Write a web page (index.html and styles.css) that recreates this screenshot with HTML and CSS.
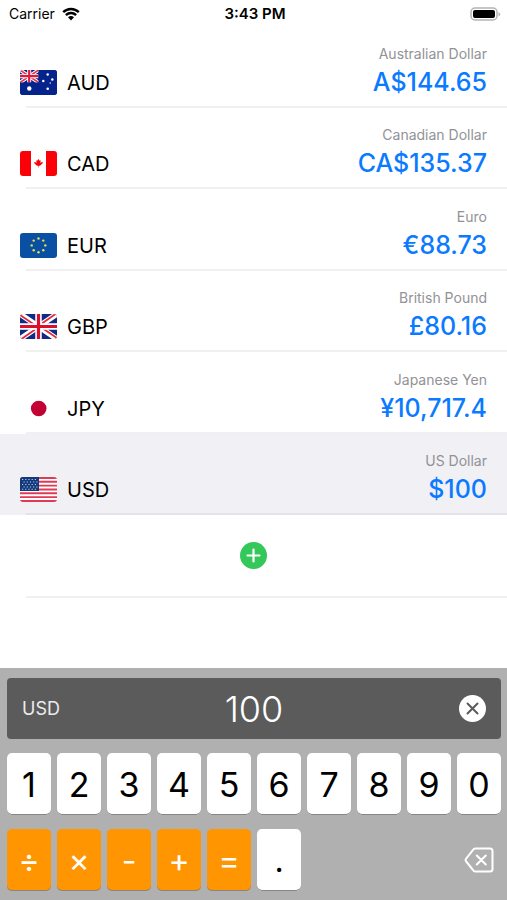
FILE: index.html
```html
<!DOCTYPE html>
<html lang="en">
<head>
<meta charset="utf-8">
<meta name="viewport" content="width=device-width, initial-scale=1">
<title>Currency Converter</title>
<link rel="stylesheet" href="styles.css">
</head>
<body>
<header class="status">
  <div class="carrier">
    <span>Carrier</span>
    <svg class="wifi" viewBox="0 0 18 14" aria-hidden="true">
      <path d="M1.2 5.2a11.2 11.2 0 0 1 15.6 0M3.9 8.1a7.3 7.3 0 0 1 10.2 0" fill="none" stroke="#000" stroke-width="2.4"/>
      <path d="M6 10.3a4.4 4.4 0 0 1 6 0l-3 3.3z"/>
    </svg>
  </div>
  <time class="clock">3:43 PM</time>
  <svg class="battery" viewBox="0 0 31 14" aria-hidden="true">
    <rect x="1" y="1" width="26" height="12" rx="4" fill="#fff" stroke="#b4b4b4" stroke-width="1.5"/>
    <rect x="3" y="3" width="22" height="8" rx="2"/>
    <path d="M28.5 5v4.4q1.7-.7 1.7-2.2t-1.7-2.2" fill="#b4b4b4"/>
  </svg>
</header>

<main class="content">
  <ul class="currencies">
    <li><button class="row" type="button">
      <svg class="flag" viewBox="0 0 37 25" aria-hidden="true">
        <rect width="37" height="25" fill="#04248c"/>
        <path d="M0 0l18.500 12.500M18.500 0l-18.500 12.500" stroke="#fff" stroke-width="3.600"/>
        <path d="M0 0l18.500 12.500M18.500 0l-18.500 12.500" stroke="#e8354c" stroke-width="1.600"/>
        <path d="M9.200 0v12.500M0 6.200h18.500" stroke="#fff" stroke-width="4"/>
        <path d="M9.200 0v12.500M0 6.200h18.500" stroke="#e0183c" stroke-width="2.200"/>
        <path d="M0 12.500h18.500V0H37v25H0z" fill="#04248c"/>
        <g fill="#fff"><circle cx="9.300" cy="18.500" r="2.200"/><circle cx="27.700" cy="4.500" r="1.200"/><circle cx="23.300" cy="11" r="1.200"/><circle cx="32.300" cy="9.500" r="1.200"/><circle cx="27.700" cy="18.700" r="1.300"/><circle cx="30.200" cy="13" r=".7"/></g>
      </svg>
      <span class="code">AUD</span>
      <span class="figures"><span class="name">Australian Dollar</span><span class="amount">A$144.65</span></span>
    </button></li>
    <li><button class="row" type="button">
      <svg class="flag" viewBox="0 0 37 25" aria-hidden="true">
        <rect width="37" height="25" fill="#fff"/>
        <path d="M0 0h11v25H0zM26 0h11v25H26z" fill="#fb0006"/>
        <path d="M18.500 8l1.200 1.800 1-.5-.3 2.600 1.500-1 1 .3-.5 1.300-2.500 2.200h-1.200v1.800h-.5v-1.800h-1.200l-2.500-2.200-.4-1.300 1-.3 1.500 1-.4-2.600 1 .5z" fill="#fb0006"/>
      </svg>
      <span class="code">CAD</span>
      <span class="figures"><span class="name">Canadian Dollar</span><span class="amount">CA$135.37</span></span>
    </button></li>
    <li><button class="row" type="button">
      <svg class="flag" viewBox="0 0 37 25" aria-hidden="true">
        <rect width="37" height="25" fill="#0950a5"/>
        <g fill="#e6e04a"><circle cx="18.500" cy="5.500" r="1.200"/><circle cx="23.300" cy="7.600" r="1.200"/><circle cx="25.300" cy="12.400" r="1.200"/><circle cx="23.300" cy="17.200" r="1.200"/><circle cx="18.500" cy="19.200" r="1.200"/><circle cx="13.700" cy="17.200" r="1.200"/><circle cx="11.700" cy="12.400" r="1.200"/><circle cx="13.700" cy="7.600" r="1.200"/></g>
      </svg>
      <span class="code">EUR</span>
      <span class="figures"><span class="name">Euro</span><span class="amount">€88.73</span></span>
    </button></li>
    <li><button class="row" type="button">
      <svg class="flag" viewBox="0 0 37 25" aria-hidden="true">
        <rect width="37" height="25" fill="#102a86"/>
        <path d="M0 0l37 25M37 0L0 25" stroke="#fff" stroke-width="5.500"/>
        <path d="M0 1l17 11.500M35.500 0L19 11.500M37 24L20 12.500M1.500 25L18 13.500" stroke="#e3293c" stroke-width="1.800"/>
        <path d="M18.500 0v25M0 12.500h37" stroke="#fff" stroke-width="6.500"/>
        <path d="M18.500 0v25M0 12.500h37" stroke="#d8102e" stroke-width="3.200"/>
      </svg>
      <span class="code">GBP</span>
      <span class="figures"><span class="name">British Pound</span><span class="amount">£80.16</span></span>
    </button></li>
    <li><button class="row" type="button">
      <svg class="flag" viewBox="0 0 37 25" aria-hidden="true">
        <rect width="37" height="25" fill="#fff"/>
        <circle cx="18.700" cy="12.500" r="7.800" fill="#c00234"/>
      </svg>
      <span class="code">JPY</span>
      <span class="figures"><span class="name">Japanese Yen</span><span class="amount">¥10,717.4</span></span>
    </button></li>
    <li><button class="row selected" type="button" aria-pressed="true">
      <svg class="flag" viewBox="0 0 37 25" aria-hidden="true">
        <rect width="37" height="25" fill="#fff"/>
        <path d="M0 1h37M0 4.830h37M0 8.660h37M0 12.500h37M0 16.330h37M0 20.160h37M0 24h37" stroke="#df3b56" stroke-width="1.920"/>
        <rect width="19" height="14" fill="#123a7c"/>
        <path d="M2 2.500h16M3.500 5h14M2 7.500h16M3.500 10h14M2 12.300h16" stroke="#b9cbe4" stroke-width="1.100" stroke-dasharray="1.200 2"/>
      </svg>
      <span class="code">USD</span>
      <span class="figures"><span class="name">US Dollar</span><span class="amount">$100</span></span>
    </button></li>
  </ul>
  <div class="add-row">
    <button class="add" type="button" aria-label="Add currency">
      <svg viewBox="0 0 27 27" aria-hidden="true"><path d="M13.500 7.500v12M7.500 13.500h12" stroke="#fff" stroke-width="2.200" stroke-linecap="round"/></svg>
    </button>
  </div>
</main>

<section class="keyboard" aria-label="Calculator">
  <div class="display">
    <label for="value">USD</label>
    <input id="value" type="text" inputmode="decimal" value="100">
    <button class="clear" type="button" aria-label="Clear">
      <svg viewBox="0 0 27 27" aria-hidden="true"><path d="M8.500 8.500l10 10M18.500 8.500l-10 10" stroke="#5b5b5b" stroke-width="2" stroke-linecap="round"/></svg>
    </button>
  </div>
  <div class="keys">
    <button type="button">1</button>
    <button type="button">2</button>
    <button type="button">3</button>
    <button type="button">4</button>
    <button type="button">5</button>
    <button type="button">6</button>
    <button type="button">7</button>
    <button type="button">8</button>
    <button type="button">9</button>
    <button type="button">0</button>
    <button class="op" type="button">÷</button>
    <button class="op" type="button">×</button>
    <button class="op" type="button">-</button>
    <button class="op" type="button">+</button>
    <button class="op" type="button">=</button>
    <button class="point" type="button">.</button>
    <button class="delete" type="button" aria-label="Delete">
      <svg viewBox="0 0 30 26" aria-hidden="true"><path d="M11.500 1.500H26q2.500 0 2.500 2.500v18q0 2.500-2.500 2.500H11.500q-1.200 0-2-.9L2.200 14.500q-1.200-1.500 0-3L9.500 2.400q.8-.9 2-.9zM12.800 8.500l9 9M21.800 8.500l-9 9" fill="none" stroke="#fff" stroke-width="2" stroke-linecap="round" stroke-linejoin="round"/></svg>
    </button>
  </div>
</section>
</body>
</html>
```
FILE: styles.css
```css
* {
  box-sizing: border-box;
}

body {
  margin: 0;
  min-height: 100vh;
  display: flex;
  flex-direction: column;
  background: #fff;
  color: #000;
  font-family: Inter, "Liberation Sans", sans-serif;
}

button,
input {
  margin: 0;
  padding: 0;
  border: 0;
  font: inherit;
  color: inherit;
}

svg {
  display: block;
}

.status {
  display: grid;
  grid-template-columns: 1fr auto 1fr;
  align-items: center;
  height: 26px;
  padding: 1px 6px 0 9px;
  font-size: 14px;
  line-height: 20px;
}

.carrier {
  display: flex;
  align-items: center;
  gap: 7px;
}

.wifi {
  width: 18px;
  height: 14px;
}

.clock {
  font-size: 15px;
  font-weight: 600;
}

.battery {
  width: 31px;
  height: 14px;
  justify-self: end;
}

.content {
  flex: 1;
  display: flex;
  flex-direction: column;
  padding-bottom: 70px;
}

.currencies {
  flex: 1;
  display: grid;
  grid-auto-rows: 1fr;
  margin: 0;
  padding: 0;
  list-style: none;
}

.currencies li {
  display: grid;
}

.row,
.add-row {
  background: linear-gradient(#f0f0f1, #f0f0f1) right bottom / calc(100% - 26px) 2px no-repeat;
}

.row {
  display: flex;
  align-items: flex-end;
  gap: 10px;
  padding: 0 20px 10px;
  text-align: left;
}

.row.selected {
  background-color: #f1f0f5;
  background-image: linear-gradient(#e4e4e8, #e4e4e8);
}

.flag {
  width: 37px;
  height: 25px;
  margin-bottom: 3px;
  border-radius: 3px;
}

.code {
  flex: 1;
  padding-bottom: 1px;
  font-size: 20px;
  line-height: 28px;
}

.figures {
  display: flex;
  flex-direction: column;
  text-align: right;
}

.name {
  font-size: 14px;
  line-height: 24px;
  color: #929296;
}

.amount {
  font-size: 25px;
  font-weight: 500;
  line-height: 32px;
  color: #0a7aff;
}

.add-row {
  display: flex;
  align-items: center;
  justify-content: center;
  height: 83px;
  padding-bottom: 2px;
}

.add,
.clear {
  width: 27px;
  height: 27px;
  border-radius: 50%;
}

.add {
  background: #34c759;
}

.keyboard {
  padding: 10px 6px 9px 7px;
  background: #b0b0b0;
}

.display {
  display: grid;
  grid-template-columns: 1fr auto 1fr;
  align-items: center;
  height: 61px;
  margin-bottom: 14px;
  padding: 0 15px;
  border-radius: 4px;
  background: #5b5b5b;
  color: #fff;
}

.display label {
  font-size: 18px;
  color: #ececec;
}

.display input {
  width: 240px;
  background: none;
  font-size: 36px;
  font-weight: 300;
  text-align: center;
}

.clear {
  justify-self: end;
  background: #fff;
}

.keys {
  display: grid;
  grid-template-columns: repeat(10, 1fr);
  gap: 14px 6px;
}

.keys button {
  height: 62px;
  border-radius: 5px;
  background: #fff;
  box-shadow: inset 0 -1px #858585;
  font-size: 34px;
}

.keys .op {
  padding-top: 1px;
  background: #ff9500;
  color: #fff;
  font-size: 32px;
}

.keys .point {
  font-size: 32px;
}

.keys .delete {
  grid-column: 9 / 11;
  display: flex;
  align-items: center;
  justify-content: flex-end;
  padding-right: 7px;
  background: none;
  box-shadow: none;
}

.delete svg {
  width: 30px;
  height: 26px;
}
```
